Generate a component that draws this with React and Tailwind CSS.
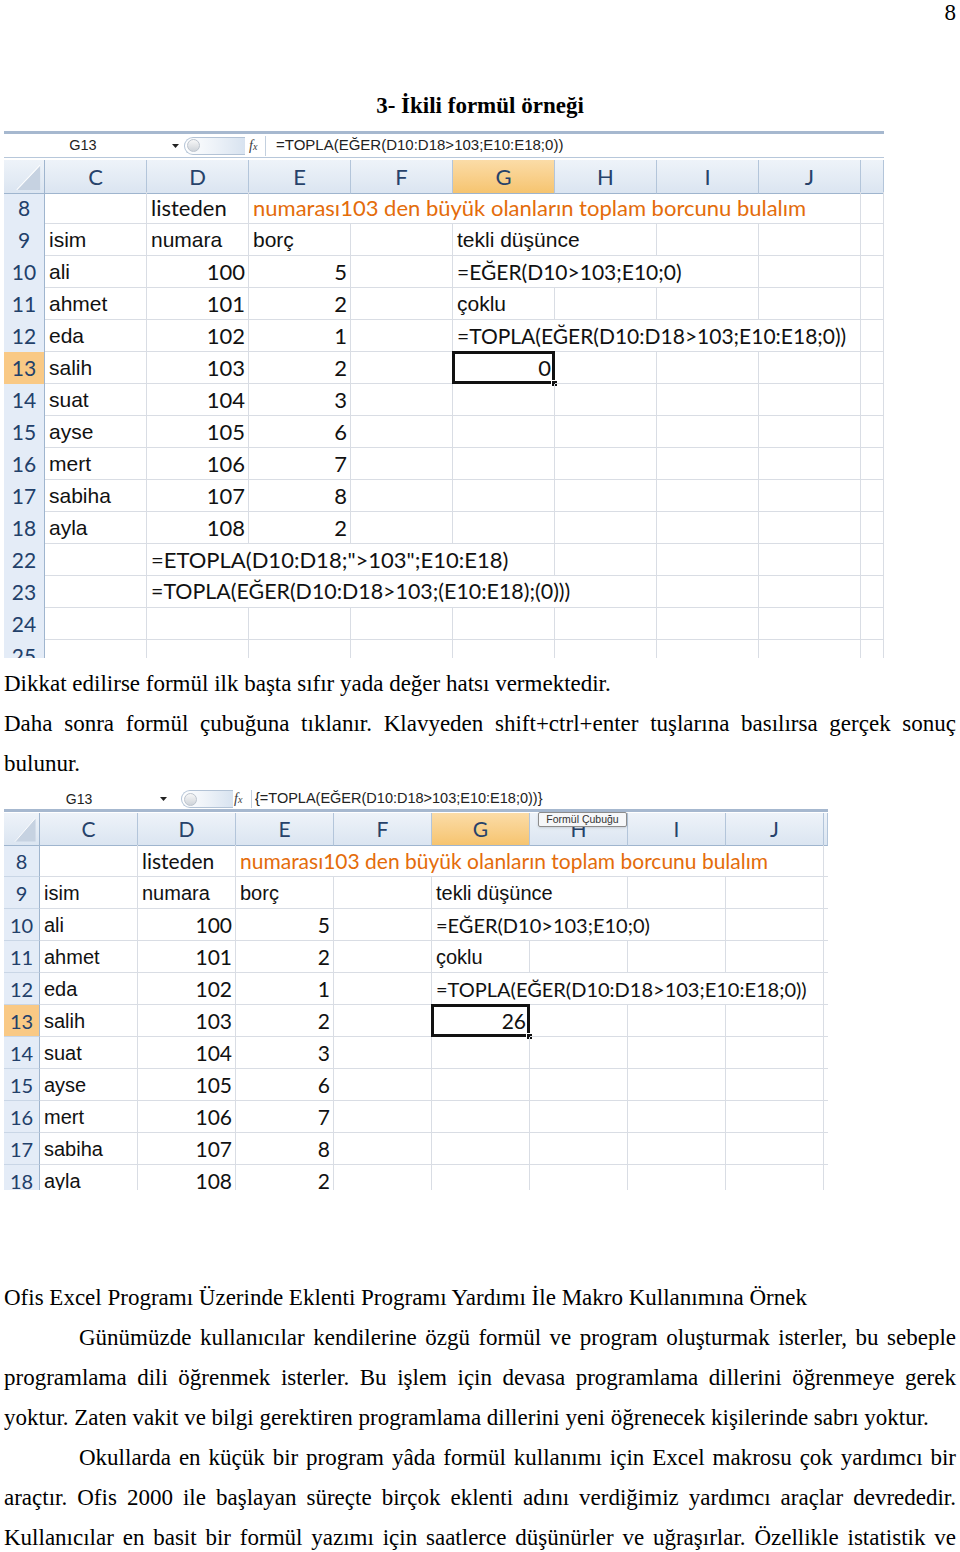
import React from "react";

const ARIAL = "font-['Liberation_Sans',Arial,sans-serif]";
const CAL = "font-['Lato',sans-serif]";
const SERIF = "font-['Liberation_Serif','Times_New_Roman',serif]";

const SPAN = { 1: "", 2: "col-span-2", 3: "col-span-3", 4: "col-span-4", 5: "col-span-5", 6: "col-span-6" };

const V = {
  1: {
    grid: "grid grid-cols-[41px_repeat(8,102px)_23px]",
    a: "text-[21px]",
    c: "text-[22px]",
    f: "text-[21px]",
    f2: "text-[21.4px]",
    hn: "text-[21px]",
  },
  2: {
    grid: "grid grid-cols-[36px_repeat(8,98px)_4px]",
    a: "text-[20px]",
    c: "text-[21px]",
    f: "text-[20px]",
    f2: "text-[20.4px]",
    hn: "text-[20px]",
  },
};

function buildRows(g13, withExtra) {
  const rows = [
    { n: "8", cells: [{}, { t: "listeden" }, { t: "numarası103 den büyük olanların toplam borcunu bulalım", span: 6, orange: true }, {}] },
    { n: "9", cells: [{ t: "isim", f: "a" }, { t: "numara", f: "a" }, { t: "borç", f: "a" }, {}, { t: "tekli düşünce", f: "a", span: 2 }, {}, {}, {}] },
    { n: "10", cells: [{ t: "ali", f: "a" }, { t: "100", r: 1 }, { t: "5", r: 1 }, {}, { t: "=EĞER(D10>103;E10;0)", span: 3, f: "f" }, {}, {}] },
    { n: "11", cells: [{ t: "ahmet", f: "a" }, { t: "101", r: 1 }, { t: "2", r: 1 }, {}, { t: "çoklu", f: "a" }, {}, {}, {}, {}] },
    { n: "12", cells: [{ t: "eda", f: "a" }, { t: "102", r: 1 }, { t: "1", r: 1 }, {}, { t: "=TOPLA(EĞER(D10:D18>103;E10:E18;0))", span: 4, f: "f" }, {}] },
    { n: "13", hl: true, cells: [{ t: "salih", f: "a" }, { t: "103", r: 1 }, { t: "2", r: 1 }, {}, { t: g13, r: 1, sel: true }, {}, {}, {}, {}] },
  ];
  const rest = [
    ["14", "suat", "104", "3"],
    ["15", "ayse", "105", "6"],
    ["16", "mert", "106", "7"],
    ["17", "sabiha", "107", "8"],
    ["18", "ayla", "108", "2"],
  ];
  rest.forEach(([n, name, num, v]) => {
    rows.push({ n, cells: [{ t: name, f: "a" }, { t: num, r: 1 }, { t: v, r: 1 }, {}, {}, {}, {}, {}, {}] });
  });
  if (withExtra) {
    rows.push({ n: "22", cells: [{}, { t: '=ETOPLA(D10:D18;">103";E10:E18)', span: 4 }, {}, {}, {}, {}] });
    rows.push({ n: "23", cells: [{}, { t: "=TOPLA(EĞER(D10:D18>103;(E10:E18);(0)))", span: 5, f: "f2" }, {}, {}, {}] });
    rows.push({ n: "24", cells: [{}, {}, {}, {}, {}, {}, {}, {}, {}] });
    rows.push({ n: "25", cells: [{}, {}, {}, {}, {}, {}, {}, {}, {}] });
  }
  return rows;
}

function Cell({ c, v }) {
  let font = `${CAL} ${V[v].c}`;
  if (c.f === "a") font = `${ARIAL} ${V[v].a}`;
  if (c.f === "f") font = `${CAL} ${V[v].f}`;
  if (c.f === "f2") font = `${CAL} ${V[v].f2}`;
  return (
    <div
      className={`relative flex h-[32px] items-center border-r border-b border-[#d9dde4] ${SPAN[c.span || 1]} ${
        c.r ? "justify-end pr-[3px]" : "pl-[4px]"
      }`}
    >
      {c.t ? (
        <span className={`whitespace-nowrap leading-none ${font} ${c.orange ? "text-[#e46c0a]" : "text-[#111]"}`}>{c.t}</span>
      ) : null}
      {c.sel ? (
        <>
          <div className="pointer-events-none absolute -left-[1px] -top-[1px] right-[-1px] bottom-[-1px] border-[3px] border-[#111]" />
          <div className="absolute right-[-4px] bottom-[-4px] h-[7px] w-[7px] border border-white bg-[#111]" />
        </>
      ) : null}
    </div>
  );
}

function HeaderRow({ v }) {
  const letters = ["C", "D", "E", "F", "G", "H", "I", "J", ""];
  return (
    <div className={`${V[v].grid} h-[32px]`}>
      <div className="relative border-r border-b border-[#9fb5ce] bg-linear-to-b from-[#eef3f9] to-[#dbe5f1]">
        <svg className="absolute inset-0" width="100%" height="100%" viewBox="0 0 41 32" preserveAspectRatio="none">
          <polygon points="37,5 37,29 13,29" fill="#c6d2e1" />
          <polyline points="13,29 37,5" stroke="#ffffff" strokeWidth="1" fill="none" />
        </svg>
      </div>
      {letters.map((l, i) => (
        <div
          key={i}
          className={`flex items-center justify-center border-r border-b border-r-[#b3c5da] border-b-[#9fb5ce] ${CAL} ${
            v === 1 ? "text-[22px]" : "text-[21px]"
          } text-[#27426a] ${l === "G" ? "bg-linear-to-b from-[#fbdca7] to-[#f6c46f]" : "bg-linear-to-b from-[#eef3f9] to-[#dbe5f1]"}`}
        >
          {l}
        </div>
      ))}
    </div>
  );
}

function Pill({ cls }) {
  return (
    <div className={`flex h-[18px] items-center rounded-l-full border border-r-0 border-[#b3c3d6] bg-linear-to-r from-[#ffffff] via-[#edf2f8] to-[#d8e3f0] pl-[2px] ${cls}`}>
      <div className="h-[13px] w-[13px] rounded-full border border-[#bcc4ce] bg-linear-to-b from-[#f7f7f7] to-[#cfd4da]" />
    </div>
  );
}

function Fx({ cls }) {
  return (
    <span className={`${SERIF} italic text-[14px] leading-none text-[#3a3a3a] ${cls}`}>
      f<span className="text-[10px]">x</span>
    </span>
  );
}

function Arrow({ cls }) {
  return (
    <div className={`flex justify-center ${cls}`}>
      <svg width="7" height="4" viewBox="0 0 7 4">
        <path d="M0 0h7L3.5 4z" fill="#222" />
      </svg>
    </div>
  );
}

function FormulaBar1() {
  return (
    <div className="flex h-[24px] items-center border-b border-[#b7c7da] bg-white">
      <div className={`w-[158px] text-center text-[14.5px] text-[#222] ${ARIAL}`}>G13</div>
      <Arrow cls="ml-[8px] w-[10px]" />
      <Pill cls="ml-[4px] w-[61px]" />
      <Fx cls="ml-[4px] w-[14px]" />
      <div className="ml-[2px] h-[20px] w-px bg-[#c3d0df]" />
      <div className={`pl-[10px] text-[15px] text-[#222] ${ARIAL}`}>=TOPLA(EĞER(D10:D18&gt;103;E10:E18;0))</div>
    </div>
  );
}

function FormulaBar2() {
  return (
    <div className="flex h-[20px] items-center bg-white">
      <div className={`w-[150px] text-center text-[14px] text-[#222] ${ARIAL}`}>G13</div>
      <Arrow cls="ml-[3px] w-[12px]" />
      <Pill cls="ml-[12px] w-[52px] h-[17px]" />
      <Fx cls="ml-[1px] w-[14px]" />
      <div className="ml-[3px] h-[18px] w-px bg-[#c3d0df]" />
      <div className={`pl-[3px] text-[14.5px] text-[#222] ${ARIAL}`}>{"{=TOPLA(EĞER(D10:D18>103;E10:E18;0))}"}</div>
    </div>
  );
}

function Rows({ v, rows }) {
  return rows.map((r) => (
    <div key={r.n} className={`${V[v].grid} h-[32px]`}>
      <div
        className={`flex items-center justify-center border-r border-b border-r-[#9fb5ce] border-b-[#c9d6e6] ${CAL} ${V[v].hn} text-[#22406a] ${
          r.hl ? "bg-[#f9c985]" : "bg-[#e4ecf7]"
        }`}
      >
        {r.n}
      </div>
      {r.cells.map((c, i) => (
        <Cell key={i} c={c} v={v} />
      ))}
    </div>
  ));
}

function Sheet1() {
  const rows = buildRows("0", true);
  return (
    <div className="h-[527px] w-[880px] overflow-hidden bg-white">
      <div className="h-[3px] bg-[#a6b8cf]" />
      <FormulaBar1 />
      <div className="h-[2px] bg-white" />
      <HeaderRow v={1} />
      <Rows v={1} rows={rows} />
    </div>
  );
}

function Sheet2() {
  const rows = buildRows("26", false);
  return (
    <div className="relative h-[401px] w-[824px] overflow-hidden bg-white">
      <FormulaBar2 />
      <div className="h-[3px] bg-[#a6b8cf]" />
      <div className="h-[1px] bg-white" />
      <HeaderRow v={2} />
      <Rows v={2} rows={rows} />
      <div
        className={`absolute left-[534px] top-[23px] flex h-[15px] w-[89px] items-center justify-center rounded-[2px] border border-[#8c8c8c] bg-[#f6f7f9] text-[10.5px] leading-none text-[#333] shadow-sm ${ARIAL}`}
      >
        Formül Çubuğu
      </div>
    </div>
  );
}

const J = "text-justify [text-align-last:justify]";

export default function App() {
  return (
    <div className={`w-[960px] bg-white text-black ${SERIF}`}>
      <div className="flex h-[91px] items-start justify-end pr-[4px]">
        <span className="text-[23px] leading-[26px]">8</span>
      </div>
      <h1 className="h-[30px] text-center text-[23px] font-bold leading-[30px]">3- İkili formül örneği</h1>
      <div className="h-[10px]" />
      <div className="pl-[4px]">
        <Sheet1 />
      </div>
      <div className="mt-[6px] px-[4px] text-[23px] leading-[40px]">
        <div>Dikkat edilirse formül ilk başta sıfır yada değer hatsı vermektedir.</div>
        <div className={J}>Daha sonra formül çubuğuna tıklanır. Klavyeden shift+ctrl+enter tuşlarına basılırsa gerçek sonuç</div>
        <div>bulunur.</div>
      </div>
      <div className="mt-[5px] pl-[4px]">
        <Sheet2 />
      </div>
      <div className="mt-[88px] px-[4px] pb-[20px] text-[23px] leading-[40px]">
        <div>Ofis Excel Programı Üzerinde Eklenti Programı Yardımı İle Makro Kullanımına Örnek</div>
        <div className={`pl-[75px] ${J}`}>Günümüzde kullanıcılar kendilerine özgü formül ve program oluşturmak isterler, bu sebeple</div>
        <div className={J}>programlama dili öğrenmek isterler. Bu işlem için devasa programlama dillerini öğrenmeye gerek</div>
        <div>yoktur. Zaten vakit ve bilgi gerektiren programlama dillerini yeni öğrenecek kişilerinde sabrı yoktur.</div>
        <div className={`pl-[75px] ${J}`}>Okullarda en küçük bir program yâda formül kullanımı için Excel makrosu çok yardımcı bir</div>
        <div className={J}>araçtır. Ofis 2000 ile başlayan süreçte birçok eklenti adını verdiğimiz yardımcı araçlar devrededir.</div>
        <div className={J}>Kullanıcılar en basit bir formül yazımı için saatlerce düşünürler ve uğraşırlar. Özellikle istatistik ve</div>
      </div>
    </div>
  );
}
